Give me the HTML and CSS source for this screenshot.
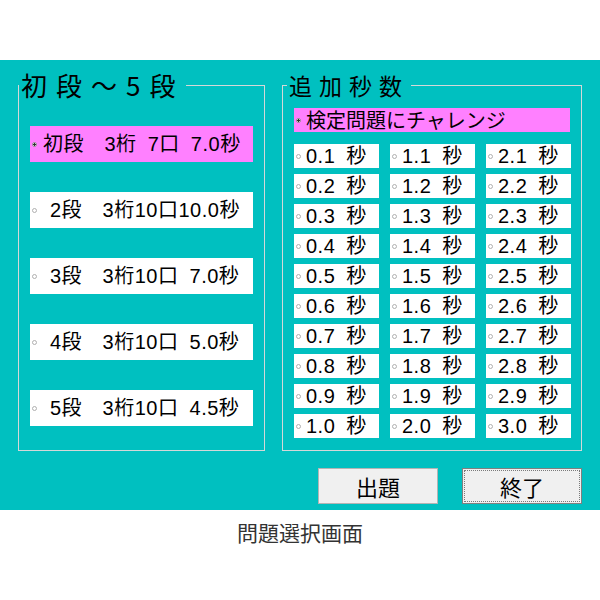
FILE: index.html
```html
<!DOCTYPE html>
<html lang="ja">
<head>
<meta charset="utf-8">
<title>問題選択画面</title>
<link rel="stylesheet" href="styles.css">
</head>
<body>
<div class="top-space"></div>
<div class="window">
  <div class="groups">
    <fieldset class="group group-left">
      <legend class="legend-left">初段～5段</legend>
      <div class="level-list">
        <label class="level selected"><span class="radio"></span><span class="level-text">初段　3桁 7口 7.0秒</span></label>
        <label class="level"><span class="radio"></span><span class="level-text num">2段　3桁10口10.0秒</span></label>
        <label class="level"><span class="radio"></span><span class="level-text num">3段　3桁10口 7.0秒</span></label>
        <label class="level"><span class="radio"></span><span class="level-text num">4段　3桁10口 5.0秒</span></label>
        <label class="level"><span class="radio"></span><span class="level-text num">5段　3桁10口 4.5秒</span></label>
      </div>
    </fieldset>
    <fieldset class="group group-right">
      <legend class="legend-right">追加秒数</legend>
      <label class="challenge selected"><span class="radio"></span><span class="challenge-text">検定問題にチャレンジ</span></label>
      <div class="sec-grid">
        <label class="sec"><span class="radio"></span><span class="cell-text">0.1 秒</span></label>
        <label class="sec"><span class="radio"></span><span class="cell-text">1.1 秒</span></label>
        <label class="sec"><span class="radio"></span><span class="cell-text">2.1 秒</span></label>
        <label class="sec"><span class="radio"></span><span class="cell-text">0.2 秒</span></label>
        <label class="sec"><span class="radio"></span><span class="cell-text">1.2 秒</span></label>
        <label class="sec"><span class="radio"></span><span class="cell-text">2.2 秒</span></label>
        <label class="sec"><span class="radio"></span><span class="cell-text">0.3 秒</span></label>
        <label class="sec"><span class="radio"></span><span class="cell-text">1.3 秒</span></label>
        <label class="sec"><span class="radio"></span><span class="cell-text">2.3 秒</span></label>
        <label class="sec"><span class="radio"></span><span class="cell-text">0.4 秒</span></label>
        <label class="sec"><span class="radio"></span><span class="cell-text">1.4 秒</span></label>
        <label class="sec"><span class="radio"></span><span class="cell-text">2.4 秒</span></label>
        <label class="sec"><span class="radio"></span><span class="cell-text">0.5 秒</span></label>
        <label class="sec"><span class="radio"></span><span class="cell-text">1.5 秒</span></label>
        <label class="sec"><span class="radio"></span><span class="cell-text">2.5 秒</span></label>
        <label class="sec"><span class="radio"></span><span class="cell-text">0.6 秒</span></label>
        <label class="sec"><span class="radio"></span><span class="cell-text">1.6 秒</span></label>
        <label class="sec"><span class="radio"></span><span class="cell-text">2.6 秒</span></label>
        <label class="sec"><span class="radio"></span><span class="cell-text">0.7 秒</span></label>
        <label class="sec"><span class="radio"></span><span class="cell-text">1.7 秒</span></label>
        <label class="sec"><span class="radio"></span><span class="cell-text">2.7 秒</span></label>
        <label class="sec"><span class="radio"></span><span class="cell-text">0.8 秒</span></label>
        <label class="sec"><span class="radio"></span><span class="cell-text">1.8 秒</span></label>
        <label class="sec"><span class="radio"></span><span class="cell-text">2.8 秒</span></label>
        <label class="sec"><span class="radio"></span><span class="cell-text">0.9 秒</span></label>
        <label class="sec"><span class="radio"></span><span class="cell-text">1.9 秒</span></label>
        <label class="sec"><span class="radio"></span><span class="cell-text">2.9 秒</span></label>
        <label class="sec"><span class="radio"></span><span class="cell-text">1.0 秒</span></label>
        <label class="sec"><span class="radio"></span><span class="cell-text">2.0 秒</span></label>
        <label class="sec"><span class="radio"></span><span class="cell-text">3.0 秒</span></label>
      </div>
    </fieldset>
  </div>
  <div class="buttons">
    <button class="btn">出題</button>
    <button class="btn btn-default">終了</button>
  </div>
</div>
<p class="caption">問題選択画面</p>
</body>
</html>
```

FILE: styles.css
```css
* {
  box-sizing: border-box;
}

body {
  margin: 0;
  background: #ffffff;
  font-family: "Noto Sans CJK JP", "Noto Sans", sans-serif;
  color: #000000;
}

.top-space {
  height: 60px;
}

.window {
  background: #00c0c0;
  height: 450px;
  padding: 13px 18px 0 18px;
}

.groups {
  display: flex;
  gap: 17px;
  align-items: flex-start;
}

.group {
  margin: 0;
  border: 1px solid #d4d8d8;
  height: 378px;
  min-width: 0;
}

.group-left {
  width: 247px;
  padding: 29px 11px 0 11px;
}

.group-right {
  width: 300px;
  padding: 11px 11px 0 11px;
}

.legend-left,
.legend-right {
  padding: 0 2px 0 2px;
  line-height: 24px;
  height: 24px;
  white-space: nowrap;
}

.legend-left {
  margin-left: -11px;
  font-size: 26px;
  letter-spacing: 9px;
}

.legend-right {
  margin-left: -7px;
  font-size: 23px;
  letter-spacing: 7px;
}

.level-list {
  display: flex;
  flex-direction: column;
  gap: 30px;
}

.level {
  display: flex;
  align-items: center;
  height: 36px;
  background: #ffffff;
  padding-left: 2px;
  font-size: 20px;
  white-space: nowrap;
}

.level.selected,
.challenge.selected {
  background: #ff80ff;
}

.radio {
  flex: none;
  width: 5px;
  height: 5px;
  border-radius: 50%;
  border: 1px solid #b0b0b0;
  background: #ffffff;
}

.selected .radio {
  border-color: #909090;
  background: radial-gradient(circle, #303030 0 1px, #ffffff 1.3px);
}

.level-text,
.cell-text {
  font-family: "Liberation Sans", "Noto Sans CJK JP", sans-serif;
  letter-spacing: 0.5px;
  word-spacing: 5px;
}

.level-text {
  margin-left: 6px;
  line-height: 36px;
}

.level-text.num {
  margin-left: 13px;
}

.challenge {
  display: flex;
  align-items: center;
  height: 24px;
  padding-left: 2px;
  font-size: 20px;
  white-space: nowrap;
}

.challenge-text {
  margin-left: 5px;
  line-height: 24px;
}

.cell-text {
  margin-left: 5px;
  line-height: 24px;
}

.sec-grid {
  margin-top: 12px;
  display: grid;
  grid-template-columns: 85px 85px 85px;
  column-gap: 11px;
  row-gap: 6px;
}

.sec {
  display: flex;
  align-items: center;
  height: 24px;
  background: #ffffff;
  padding-left: 2px;
  font-size: 20px;
  white-space: nowrap;
}

.buttons {
  display: flex;
  justify-content: flex-end;
  gap: 24px;
  margin-top: 17px;
}

.btn {
  width: 120px;
  height: 36px;
  background: #f0f0f0;
  border: 1px solid #b4b4b4;
  font-family: "Noto Sans CJK JP", "Noto Sans", sans-serif;
  font-size: 22px;
  line-height: 34px;
  padding: 0;
  color: #000000;
}

.btn-default {
  border: 1px solid #808080;
  outline: 1px dotted #7a7a7a;
  outline-offset: -3px;
}

.caption {
  margin: 10px 0 0 0;
  text-align: center;
  font-size: 21px;
  line-height: 24px;
  color: #333333;
}
```
